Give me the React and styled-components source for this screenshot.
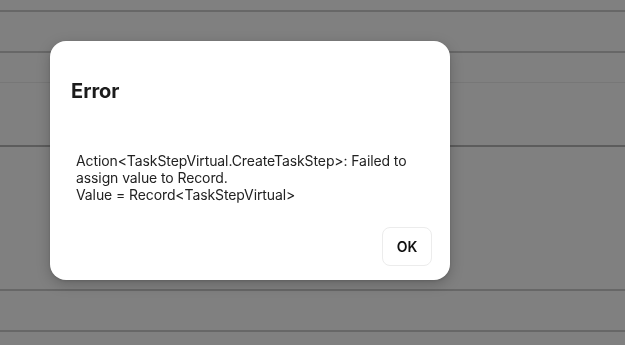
import React from "react";
import styled, { createGlobalStyle } from "styled-components";

const Global = createGlobalStyle`
  html, body { margin: 0; padding: 0; height: 100%; }
  body {
    background: #808080;
    font-family: Inter, "Noto Sans", sans-serif;
    overflow: hidden;
  }
`;

const Page = styled.div`
  display: flex;
  flex-direction: column;
  width: 100%;
  min-height: 345px;
  background: #808080;
`;

const Row = styled.div`
  height: ${(p) => p.$h}px;
  border-bottom: ${(p) => p.$bw}px solid ${(p) => p.$bc};
  flex-shrink: 0;
`;

const Dialog = styled.div`
  position: fixed;
  left: 50px;
  top: 41px;
  width: 400px;
  box-sizing: border-box;
  background: #fff;
  border-radius: 16px;
  box-shadow: 0 4px 14px rgba(0, 0, 0, 0.22), 0 1px 3px rgba(0, 0, 0, 0.12);
  display: flex;
  flex-direction: column;
  padding: 38px 18px 14px 21px;
`;

const Title = styled.h2`
  margin: 0;
  font-size: 20px;
  line-height: 24px;
  font-weight: 700;
  color: #1c1c1c;
`;

const Message = styled.p`
  margin: 49px 0 0 5px;
  font-size: 14px;
  line-height: 17px;
  letter-spacing: -0.1px;
  color: #222;
  white-space: pre-line;
`;

const Footer = styled.div`
  display: flex;
  justify-content: flex-end;
  margin-top: 24px;
`;

const Button = styled.button`
  width: 50px;
  height: 39px;
  border: 1px solid #ececec;
  border-radius: 8px;
  background: #fff;
  font-family: Inter, "Noto Sans", sans-serif;
  font-size: 14px;
  font-weight: 600;
  color: #111;
  padding: 0;
  cursor: pointer;
`;

const rows = [
  { h: 10, bw: 2, bc: "#676767" },
  { h: 39, bw: 2, bc: "#676767" },
  { h: 29, bw: 1, bc: "#777777" },
  { h: 62, bw: 2, bc: "#5c5c5c" },
  { h: 142, bw: 2, bc: "#676767" },
  { h: 39, bw: 2, bc: "#676767" },
];

export default function App() {
  return (
    <>
      <Global />
      <Page>
        {rows.map((r, i) => (
          <Row key={i} $h={r.h} $bw={r.bw} $bc={r.bc} />
        ))}
      </Page>
      <Dialog role="alertdialog">
        <Title>Error</Title>
        <Message>
          {"Action<TaskStepVirtual.CreateTaskStep>: Failed to assign value to Record.\nValue = Record<TaskStepVirtual>"}
        </Message>
        <Footer>
          <Button>OK</Button>
        </Footer>
      </Dialog>
    </>
  );
}
